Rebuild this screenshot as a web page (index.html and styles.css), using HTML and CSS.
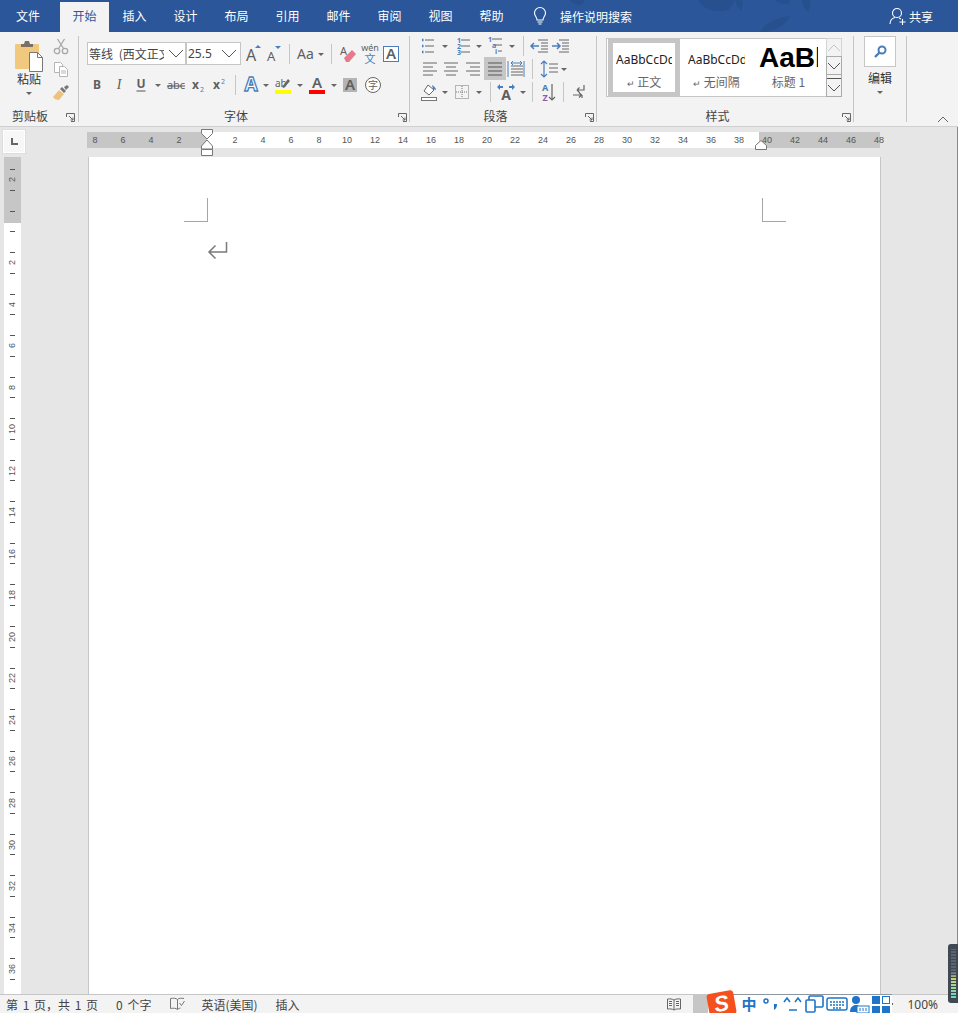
FILE: index.html
```html
<!DOCTYPE html>
<html lang="zh-CN">
<head>
    <meta charset="UTF-8">
    <title>文档1 - Word</title>
    <link rel="stylesheet" href="styles.css">
</head>
<body>

<!--Title bar and tabs-->
<header class="tabbar">
    <svg class="leaves" width="320" height="32" viewBox="0 0 320 32">
        <path d="M0 0c3 4 8 6 13 4l2-4z M128 0c4 8 16 14 30 10 4-3 6-7 6-10z M165 0c1 4 3 8 6 11 2-3 2-8 1-11z M190 32c4-8 14-14 30-16-4 9-14 15-24 16z M205 0c3 3 8 5 14 4l1-4z M232 0c0 5 2 9 6 12 2-4 3-9 2-12z"/>
    </svg>
    <a class="tab tab-first">文件</a>
    <a class="tab tab-active">开始</a>
    <a class="tab">插入</a>
    <a class="tab">设计</a>
    <a class="tab">布局</a>
    <a class="tab">引用</a>
    <a class="tab">邮件</a>
    <a class="tab">审阅</a>
    <a class="tab">视图</a>
    <a class="tab">帮助</a>
    <div class="search">
        <svg width="16" height="20" viewBox="0 0 16 20" fill="none" stroke="#fff" stroke-width="1.1"><path d="M5 14c0-3-2.500-4-2.500-7a5.500 5.500 0 0 1 11 0c0 3-2.500 4-2.500 7z"/><path d="M5.500 16h5M6.500 18h3"/></svg>
        <span>操作说明搜索</span>
    </div>
    <div class="share">
        <svg width="18" height="20" viewBox="0 0 18 20" fill="none" stroke="#fff" stroke-width="1.1"><circle cx="8" cy="7" r="4.500"/><path d="M1 18c0-4 3-6 5-6.500M10 12l2 1M13.500 13v6M10.500 16h6"/></svg>
        <span>共享</span>
    </div>
</header>

<!--Ribbon-->
<section class="ribbon">

    <!--Clipboard-->
    <div class="group group-clip">
        <div class="group-body clip-body">
            <div class="paste">
                <svg width="30" height="32" viewBox="0 0 30 32">
                    <rect x="1" y="4" width="24" height="25" rx="1" fill="#f0c97f"/>
                    <path d="M7 7V4h3l1-3h4l1 3h3v3z" fill="#7c7066"/>
                    <path d="M15.500 12.500h8l5 5v14h-13z" fill="#fff" stroke="#777"/>
                    <path d="M23.500 12.500v5h5" fill="none" stroke="#777"/>
                </svg>
                <span>粘贴</span>
                <svg width="12" height="8" viewBox="0 0 12 8"><path d="M3 2h6l-3 3z" fill="#666"/></svg>
            </div>
            <div class="clip-tools">
                <svg width="18" height="17" viewBox="0 0 18 17" fill="none" stroke="#a8a8a8" stroke-width="1.300"><circle cx="5" cy="13" r="2.700"/><circle cx="13" cy="13" r="2.700"/><path d="M6.500 10.500L12.500 1M11.500 10.500L5.500 1"/></svg>
                <svg width="18" height="17" viewBox="0 0 18 17" fill="#fff" stroke="#b4b4b4"><path d="M2.500 1.500h6l2 2v8h-8z"/><path d="M7.500 5.500h5l3 3v7h-8z"/><path d="M9 10h5M9 12h5" /></svg>
                <svg width="18" height="17" viewBox="0 0 18 17"><path d="M1 13l6-7 5 4-5 6c-3 0-5-1-6-3z" fill="#edc37c"/><path d="M8 5l2-2 4 4-2 2z" fill="#777"/><path d="M12 3l3-2 2 2-3 3z" fill="#777"/></svg>
            </div>
        </div>
        <div class="group-label label-clip">剪贴板
            <svg class="launcher" width="9" height="9" viewBox="0 0 9 9" fill="none" stroke="#666"><path d="M.5 4V.5h8v8H5M3 3l4 4M7 4.500V7H4.500"/></svg>
        </div>
    </div>

    <!--Font-->
    <div class="group group-font">
        <div class="group-body">
            <div class="font-row font-row-top">
                <div class="combo combo-font"><span>等线 (西文正文)</span>
                    <svg width="16" height="10" viewBox="0 0 16 10" fill="none" stroke="#555"><path d="M1 1l7 7 7-7"/></svg>
                </div>
                <div class="combo combo-size"><span>25.5</span>
                    <svg width="16" height="10" viewBox="0 0 16 10" fill="none" stroke="#555"><path d="M1 1l7 7 7-7"/></svg>
                </div>
                <svg width="22" height="20" viewBox="-11 -10 22 20"><text x="-6" y="7" class="ico-a">A</text><path d="M3-6h6l-3-3z" fill="#4a7ebb"/></svg>
                <svg width="21" height="20" viewBox="-10 -10 21 20"><text x="-6" y="7" class="ico-a ico-a-small">A</text><path d="M2-8h6l-3 3z" fill="#4a7ebb"/></svg>
                <i class="sep"></i>
                <svg width="21" height="20" viewBox="-10 -10 21 20"><text x="-8" y="5" class="ico-aa">Aa</text></svg>
                <svg width="10" height="20" viewBox="-5 -10 10 20"><path d="M-3-1h6l-3 3z" fill="#666"/></svg>
                <i class="sep"></i>
                <svg width="22" height="20" viewBox="-11 -10 22 20"><text x="-8" y="1" class="ico-a ico-a-tiny">A</text><path d="M-4 4l8-8 4 4-7 8h-3z" fill="#e8788a"/></svg>
                <svg class="wen" width="22" height="24" viewBox="-11 -12 22 24"><text x="0" y="-3" class="ico-wen">wén</text><text x="0" y="9" class="ico-wen-cn">文</text></svg>
                <svg width="21" height="20" viewBox="-10 -10 21 20"><rect x="-7.500" y="-7.500" width="15" height="15" fill="#fff" stroke="#4a7ebb"/><text x="0" y="5" class="ico-a ico-a-mid">A</text></svg>
            </div>
            <div class="font-row">
                <svg width="21" height="20" viewBox="-10 -10 21 20"><text x="0" y="4" class="ico-b">B</text></svg>
                <svg width="22" height="20" viewBox="-11 -10 22 20"><text x="0" y="4" class="ico-b ico-i">I</text></svg>
                <svg width="22" height="20" viewBox="-11 -10 22 20"><text x="0" y="3" class="ico-b">U</text><path d="M-4.500 6h9" stroke="#555"/></svg>
                <svg width="12" height="20" viewBox="-6 -10 12 20"><path d="M-3-1h6l-3 3z" fill="#666"/></svg>
                <svg width="24" height="20" viewBox="-12 -10 24 20"><text x="0" y="4" class="ico-abc">abc</text><path d="M-9 1h18" stroke="#555"/></svg>
                <svg width="21" height="20" viewBox="-10 -10 21 20"><text x="-6" y="4" class="ico-b ico-left">x</text><text x="2" y="7" class="ico-sub">2</text></svg>
                <svg width="21" height="20" viewBox="-10 -10 21 20"><text x="-6" y="4" class="ico-b ico-left">x</text><text x="2" y="-1" class="ico-sub">2</text></svg>
                <i class="sep"></i>
                <svg width="21" height="20" viewBox="-10 -10 21 20"><text x="0" y="6" class="ico-effect">A</text></svg>
                <svg width="8" height="20" viewBox="-4 -10 8 20"><path d="M-3-1h6l-3 3z" fill="#666"/></svg>
                <svg width="26" height="20" viewBox="-13 -10 26 20"><text x="-8" y="2" class="ico-ab">ab</text><path d="M-1 2l6-8 2 2-6 7z" fill="#666"/><rect x="-8" y="5" width="16" height="4" fill="#ffff00"/></svg>
                <svg width="8" height="20" viewBox="-4 -10 8 20"><path d="M-3-1h6l-3 3z" fill="#666"/></svg>
                <svg width="26" height="20" viewBox="-13 -10 26 20"><text x="0" y="3" class="ico-a ico-a-mid">A</text><rect x="-8" y="5" width="16" height="4" fill="#f00"/></svg>
                <svg width="9" height="20" viewBox="-4 -10 9 20"><path d="M-3-1h6l-3 3z" fill="#666"/></svg>
                <svg width="23" height="20" viewBox="-11 -10 23 20"><rect x="-7" y="-7" width="14" height="14" fill="#b4b4b4"/><text x="0" y="5" class="ico-a ico-a-mid">A</text></svg>
                <svg width="22" height="20" viewBox="-10 -10 22 20"><circle cx="1" r="7.500" fill="#fff" stroke="#666"/><text x="1" y="4" class="ico-zi">字</text></svg>
            </div>
        </div>
        <div class="group-label">字体
            <svg class="launcher" width="9" height="9" viewBox="0 0 9 9" fill="none" stroke="#666"><path d="M.5 4V.5h8v8H5M3 3l4 4M7 4.500V7H4.500"/></svg>
        </div>
    </div>

    <!--Paragraph-->
    <div class="group group-para">
        <div class="group-body para-body">
            <div class="para-row">
                <svg width="19" height="20" viewBox="-9 -10 19 20" stroke="#666"><path d="M-3-6h9M-3 0h9M-3 6h9"/><path d="M-6-6h1.500M-6 0h1.500M-6 6h1.500" stroke="#4a7ebb" stroke-width="2.500"/></svg>
                <svg width="14" height="20" viewBox="-7 -10 14 20"><path d="M-3-1h6l-3 3z" fill="#666"/></svg>
                <svg width="22" height="20" viewBox="-11 -10 22 20" stroke="#666"><path d="M-2-6h9M-2 0h9M-2 6h9"/><text x="-6" y="-3.500" class="ico-num">1</text><text x="-6" y="2.500" class="ico-num">2</text><text x="-6" y="8.500" class="ico-num">3</text></svg>
                <svg width="10" height="20" viewBox="-5 -10 10 20"><path d="M-3-1h6l-3 3z" fill="#666"/></svg>
                <svg width="22" height="20" viewBox="-11 -10 22 20" stroke="#666"><path d="M-3-7h10M0-1h7M3 5h4"/><text x="-7" y="-4.500" class="ico-num">1</text><text x="-3" y="1.500" class="ico-num">a</text><text x="0" y="8" class="ico-num">i</text></svg>
                <svg width="12" height="20" viewBox="-6 -10 12 20"><path d="M-3-1h6l-3 3z" fill="#666"/></svg>
                <i class="sep"></i>
                <svg width="21" height="20" viewBox="-10 -10 21 20" stroke="#666"><path d="M-1-6H9M2-3H9M2 0H9M2 3H9M-1 6H9"/><path d="M-8 0h8M-5-3l-3 3 3 3" fill="none" stroke="#4a7ebb" stroke-width="1.500"/></svg>
                <svg width="21" height="20" viewBox="-10 -10 21 20" stroke="#666"><path d="M-1-6H9M2-3H9M2 0H9M2 3H9M-1 6H9"/><path d="M-8 0h8M-3-3l3 3-3 3" fill="none" stroke="#4a7ebb" stroke-width="1.500"/></svg>
            </div>
            <div class="para-row">
                <svg width="21" height="20" viewBox="-10 -10 21 20" stroke="#666"><path d="M-6-6H8M-6-2H4M-6 2H8M-6 6H4"/></svg>
                <svg width="22" height="20" viewBox="-11 -10 22 20" stroke="#666"><path d="M-7-6H7M-5-2H5M-7 2H7M-5 6H5"/></svg>
                <svg width="22" height="20" viewBox="-11 -10 22 20" stroke="#666"><path d="M-7-6H7M-3-2H7M-7 2H7M-3 6H7"/></svg>
                <div class="active-btn"><svg width="22" height="20" viewBox="-11 -10 22 20" stroke="#555"><path d="M-7-6H7M-7-2H7M-7 2H7M-7 6H7"/></svg></div>
                <svg width="21" height="20" viewBox="-10 -10 21 20" stroke="#666" fill="none"><path d="M-5-3H7M-5 0H7M-5 3H7M-5 6H7"/><path d="M-8-8V8M8-8V8" stroke="#4a7ebb"/><path d="M-5-6H6M-3-8l-2 2 2 2M4-8l2 2-2 2" stroke="#4a7ebb"/></svg>
                <i class="sep"></i>
                <svg width="22" height="20" viewBox="-11 -10 22 20" fill="none" stroke="#666"><path d="M0-5H9M0-1H9M0 3H9"/><path d="M-5-8V8M-8-5l3-3 3 3M-8 5l3 3 3-3" stroke="#4a7ebb" stroke-width="1.200"/></svg>
                <svg width="8" height="20" viewBox="-4 -10 8 20"><path d="M-3-1h6l-3 3z" fill="#666"/></svg>
            </div>
            <div class="para-row">
                <svg width="20" height="20" viewBox="-10 -10 20 20"><path d="M-5-1l4-6 6 5-5 5z" fill="#fff" stroke="#666"/><path d="M3-7c2 1 4 3 4 5l-3-1z" fill="#4a7ebb"/><rect x="-7.500" y="5.500" width="15" height="3" fill="#fff" stroke="#777"/></svg>
                <svg width="12" height="20" viewBox="-6 -10 12 20"><path d="M-3-1h6l-3 3z" fill="#666"/></svg>
                <svg width="23" height="20" viewBox="-11 -10 23 20" fill="none" stroke="#777" stroke-dasharray="1 1"><rect x="-6.500" y="-6.500" width="13" height="13"/><path d="M0-6V6M-6 0H6"/></svg>
                <svg width="11" height="20" viewBox="-5 -10 11 20"><path d="M-3-1h6l-3 3z" fill="#666"/></svg>
                <i class="sep"></i>
                <svg width="20" height="20" viewBox="-10 -10 20 20"><text x="0" y="8" class="ico-a ico-a-wide">A</text><path d="M-9-5l3-3v2h3v2h-3v2zM9-5l-3-3v2H3v2h3v2z" fill="#4a7ebb"/></svg>
                <svg width="11" height="20" viewBox="-7 -10 11 20"><path d="M-3-1h6l-3 3z" fill="#666"/></svg>
                <i class="sep"></i>
                <svg width="20" height="20" viewBox="-10 -10 20 20"><text x="-3" y="-1" class="ico-az ico-az-a">A</text><text x="-3" y="9" class="ico-az ico-az-z">Z</text><path d="M4-8V8M1 5l3 3 3-3" fill="none" stroke="#666" stroke-width="1.200"/></svg>
                <i class="sep"></i>
                <svg width="21" height="20" viewBox="-10 -10 21 20" fill="none" stroke="#666" stroke-width="1.200"><path d="M-2-2H5V-7M-2-2l2.500-2.500M-2-2l2.500 2.500"/><path d="M-6 3H2M0 .5L2.500 3 0 5.500"/><path d="M3 3v3" /></svg>
            </div>
        </div>
        <div class="group-label">段落
            <svg class="launcher" width="9" height="9" viewBox="0 0 9 9" fill="none" stroke="#666"><path d="M.5 4V.5h8v8H5M3 3l4 4M7 4.500V7H4.500"/></svg>
        </div>
    </div>

    <!--Styles-->
    <div class="group group-styles">
        <div class="group-body styles-body">
            <div class="gallery">
                <div class="style-item style-selected">
                    <div class="preview">AaBbCcDdEe</div>
                    <div class="style-name"><small>↵</small> 正文</div>
                </div>
                <div class="style-item">
                    <div class="preview">AaBbCcDdEe</div>
                    <div class="style-name"><small>↵</small> 无间隔</div>
                </div>
                <div class="style-item style-heading">
                    <div class="preview preview-big">AaBbC</div>
                    <div class="style-name">标题 1</div>
                </div>
            </div>
            <div class="gallery-scroll">
                <div class="scroll-btn scroll-off"><svg width="14" height="10" viewBox="0 0 14 10" fill="none" stroke="#c6c6c6"><path d="M1 8l6-6 6 6"/></svg></div>
                <div class="scroll-btn"><svg width="14" height="10" viewBox="0 0 14 10" fill="none" stroke="#555"><path d="M1 2l6 6 6-6"/></svg></div>
                <div class="scroll-btn scroll-more"><svg width="14" height="10" viewBox="0 0 14 10" fill="none" stroke="#555"><path d="M1 2l6 6 6-6"/></svg></div>
            </div>
        </div>
        <div class="group-label">样式
            <svg class="launcher" width="9" height="9" viewBox="0 0 9 9" fill="none" stroke="#666"><path d="M.5 4V.5h8v8H5M3 3l4 4M7 4.500V7H4.500"/></svg>
        </div>
    </div>

    <!--Editing-->
    <div class="group group-edit">
        <div class="edit-box">
            <svg width="16" height="16" viewBox="0 0 16 16" fill="none" stroke="#4a7ebb"><circle cx="10" cy="6" r="3.500" stroke-width="2"/><path d="M7.500 8.500L3 13" stroke-width="2.400"/></svg>
        </div>
        <span class="edit-label">编辑</span>
        <svg width="12" height="8" viewBox="0 0 12 8"><path d="M3 2h6l-3 3z" fill="#666"/></svg>
    </div>

    <svg class="collapse" width="12" height="7" viewBox="0 0 12 7" fill="none" stroke="#666"><path d="M1 6l5-5 5 5"/></svg>
</section>

<!--Rulers and page-->
<main class="workspace">
    <div class="ruler-row">
        <div class="tab-stop">
            <svg width="7" height="7" viewBox="0 0 7 7" fill="none" stroke="#666" stroke-width="2"><path d="M1 0v6h6"/></svg>
        </div>
        <div class="h-ruler">
            <div class="h-marks">
                <span>8</span><span>6</span><span>4</span><span>2</span><span></span>
                <span>2</span><span>4</span><span>6</span><span>8</span><span>10</span><span>12</span>
                <span>14</span><span>16</span><span>18</span><span>20</span><span>22</span><span>24</span>
                <span>26</span><span>28</span><span>30</span><span>32</span><span>34</span><span>36</span>
                <span>38</span><span>40</span><span>42</span><span>44</span><span>46</span><span>48</span>
            </div>
            <svg class="indent-left" width="12" height="28" viewBox="0 0 12 28" fill="#fff" stroke="#777">
                <path d="M.5.500h11v4L6 10 .5 4.500z"/>
                <path d="M6 11l5.500 6v3H.5v-3z"/>
                <path d="M.5 20.500h11v6H.5z"/>
            </svg>
            <svg class="indent-right" width="12" height="10" viewBox="0 0 12 10" fill="#fff" stroke="#777">
                <path d="M.5 9.500v-4L6 .5l5.500 5v4z"/>
            </svg>
        </div>
    </div>

    <div class="doc-row">
        <div class="v-ruler">
            <div class="v-cell"><b></b><span>2</span><b></b></div>
            <div class="v-cell"><b></b><span></span><b></b></div>
            <div class="v-cell"><b></b><span>2</span><b></b></div>
            <div class="v-cell"><b></b><span>4</span><b></b></div>
            <div class="v-cell"><b></b><span>6</span><b></b></div>
            <div class="v-cell"><b></b><span>8</span><b></b></div>
            <div class="v-cell"><b></b><span>10</span><b></b></div>
            <div class="v-cell"><b></b><span>12</span><b></b></div>
            <div class="v-cell"><b></b><span>14</span><b></b></div>
            <div class="v-cell"><b></b><span>16</span><b></b></div>
            <div class="v-cell"><b></b><span>18</span><b></b></div>
            <div class="v-cell"><b></b><span>20</span><b></b></div>
            <div class="v-cell"><b></b><span>22</span><b></b></div>
            <div class="v-cell"><b></b><span>24</span><b></b></div>
            <div class="v-cell"><b></b><span>26</span><b></b></div>
            <div class="v-cell"><b></b><span>28</span><b></b></div>
            <div class="v-cell"><b></b><span>30</span><b></b></div>
            <div class="v-cell"><b></b><span>32</span><b></b></div>
            <div class="v-cell"><b></b><span>34</span><b></b></div>
            <div class="v-cell"><b></b><span>36</span><b></b></div>
        </div>
        <div class="page">
            <div class="crop-marks">
                <div class="crop crop-left"></div>
                <div class="crop crop-right"></div>
            </div>
            <svg class="para-mark" width="21" height="19" viewBox="0 0 21 19" fill="none" stroke="#7a7a7a" stroke-width="1.500"><path d="M19.500 1v10H2M8.500 4.500L2 11l6.500 6.500"/></svg>
        </div>
    </div>
</main>

<!--Status bar-->
<footer class="statusbar">
    <span class="stat-page">第 1 页，共 1 页</span>
    <span class="stat-words">0 个字</span>
    <svg class="stat-book" width="15" height="14" viewBox="0 0 15 14" fill="none" stroke="#777"><path d="M7.500 2.500C6 1 3 1 .5 1.500v10c2.500-.5 5.500-.5 7 1zM7.500 2.500C9 1 11 1 14 1.500M7.500 12.500c1-1 2-1.300 3-1.400M9.500 6l2 2.500L14.500 4"/></svg>
    <span class="stat-lang">英语(美国)</span>
    <span>插入</span>
    <div class="stat-right">
        <svg width="14" height="13" viewBox="0 0 14 13" fill="none" stroke="#666"><path d="M7 2C5 .8 3 .8.500 1v10c2.500-.2 4.500-.2 6.500 1 2-1.200 4-1.200 6.500-1V1C11 .8 9 .8 7 2zM7 2v10M2 3.500h3M2 5.500h3M2 7.500h3M9 3.500h3M9 5.500h3M9 7.500h3"/></svg>
        <div class="view-active"></div>
        <div class="zoom-dot"></div>
        <span class="zoom-pct">100%</span>
    </div>
</footer>

<!--Input method toolbar over the status bar-->
<div class="ime">
    <div class="ime-logo"><span>S</span></div>
    <span class="ime-cn">中</span>
    <svg width="22" height="18" viewBox="0 0 22 18" fill="#1e74c8"><circle cx="6" cy="6" r="2" fill="none" stroke="#1e74c8" stroke-width="1.500"/><path d="M14 9h3c0 3-1 5-3 6z"/></svg>
    <svg width="22" height="18" viewBox="0 0 22 18" fill="none" stroke="#1e74c8" stroke-width="1.600"><path d="M2 7l3-4 3 4M13 7l3-4 3 4M7 15h8"/></svg>
    <svg width="22" height="18" viewBox="0 0 22 18" fill="#fff" stroke="#1e74c8" stroke-width="1.600"><rect x="5" y="1" width="14" height="11" rx="1"/><rect x="2" y="5" width="9" height="12" rx="1"/></svg>
    <svg width="22" height="18" viewBox="0 0 22 18" fill="none" stroke="#1e74c8" stroke-width="1.500"><rect x="1" y="3" width="20" height="12" rx="2"/><path d="M4 7h14M4 10h14M7 13h8" stroke-dasharray="2 1"/></svg>
    <svg width="22" height="18" viewBox="0 0 22 18"><circle cx="8" cy="5" r="4" fill="#1e74c8"/><path d="M2 17c0-5 3-7 6-7s6 2 6 7z" fill="#1e74c8"/><rect x="9" y="11" width="12" height="7" fill="#fff" stroke="#1e74c8"/><path d="M12 13v3M15 13v3M18 13v3" stroke="#1e74c8"/></svg>
    <svg width="22" height="18" viewBox="0 0 22 18" fill="#1e74c8"><rect x="2" y="1" width="8" height="8"/><rect x="12.500" y="1.500" width="7" height="7" fill="none" stroke="#1e74c8"/><rect x="2" y="11" width="8" height="7"/><rect x="12" y="11" width="8" height="7"/></svg>
</div>

<!--Floating meter at the right edge-->
<div class="meter"></div>

</body>
</html>
```

FILE: styles.css
```css
/* Reset and page frame */
html, body {
    margin: 0;
    padding: 0;
    height: 100%;
}

body {
    display: flex;
    flex-direction: column;
    height: 1013px;
    overflow: hidden;
    position: relative;
    background-color: #e6e6e6;
    font-family: "Noto Sans CJK SC", "Liberation Sans", sans-serif;
    font-size: 12px;
    color: #444;
}

svg {
    display: block;
    flex: none;
}

/* Title bar and tabs */
.tabbar {
    flex: none;
    position: relative;
    display: flex;
    align-items: flex-end;
    height: 32px;
    background-color: #2b579a;
    color: #fff;
}

.leaves {
    position: absolute;
    left: 570px;
    top: 0;
    fill: #27508f;
}

.tab {
    position: relative;
    width: 51px;
    height: 30px;
    line-height: 28px;
    text-align: center;
}

.tab-first {
    width: 50px;
    margin-left: 3px;
    margin-right: 7px;
}

.tab-active {
    width: 49px;
    background-color: #f3f3f3;
    color: #2b579a;
}

.search {
    position: relative;
    display: flex;
    align-items: center;
    gap: 12px;
    height: 32px;
    margin-left: 3px;
    padding-left: 12px;
}

.share {
    position: relative;
    display: flex;
    align-items: center;
    gap: 2px;
    height: 32px;
    margin-left: auto;
    margin-right: 25px;
}

/* Ribbon */
.ribbon {
    flex: none;
    position: relative;
    display: flex;
    height: 95px;
    padding: 4px 0;
    box-sizing: border-box;
    background-color: #f3f3f3;
    border-bottom: 1px solid #d0d0d0;
}

.group {
    position: relative;
    display: flex;
    flex-direction: column;
    box-sizing: border-box;
    border-right: 1px solid #c6c6c6;
}

.group-body {
    flex: none;
    height: 70px;
}

.group-label {
    position: relative;
    padding-right: 24px;
    text-align: center;
    line-height: 19px;
    height: 16px;
    color: #444;
}

.launcher {
    position: absolute;
    right: 2px;
    bottom: 0;
}

.group-clip { width: 79px; padding-left: 6px; }
.group-font { width: 331px; padding-left: 8px; }
.group-para { width: 187px; padding-left: 9px; }
.group-styles { width: 257px; padding-left: 9px; }
.group-edit { width: 53px; align-items: center; }

.group-clip .group-label { margin-left: -6px; }
.group-clip .label-clip { padding-right: 18px; }
.group-clip .launcher { right: 3px; }

/* Clipboard */
.clip-body {
    display: flex;
}

.paste {
    display: flex;
    flex-direction: column;
    align-items: center;
    width: 46px;
    padding-top: 4px;
    line-height: 18px;
    color: #333;
}

.paste span {
    margin-top: -2px;
    margin-bottom: 2px;
}

.clip-tools {
    display: flex;
    flex-direction: column;
    gap: 6px;
    padding-top: 2px;
}

/* Font rows */
.font-row {
    display: flex;
    align-items: center;
    height: 20px;
}

.font-row-top {
    height: 23px;
    margin-top: 6px;
    margin-bottom: 10px;
}

.combo {
    display: flex;
    align-items: center;
    justify-content: space-between;
    box-sizing: border-box;
    height: 23px;
    padding: 0 1px 0 1px;
    background-color: #fff;
    border: 1px solid #c6c6c6;
    color: #444;
}

.combo span {
    overflow: hidden;
    white-space: nowrap;
}

.combo-font { width: 99px; }
.combo-font span { width: 75px; word-spacing: 3px; }
.combo-size { width: 55px; margin-left: 0; font-family: "Noto Sans", sans-serif; }
.combo-size svg { margin-right: 2px; }

.sep {
    flex: none;
    display: block;
    width: 1px;
    height: 20px;
    margin: 0 5px;
    background-color: #c6c6c6;
}

/* Small text inside the icons */
svg text {
    text-anchor: middle;
    font-family: "Noto Sans", "Liberation Sans", sans-serif;
    fill: #5f5f5f;
    stroke: none;
}

.ico-a { font-size: 16px; text-anchor: start; }
.ico-a-small { font-size: 13px; }
.ico-a-tiny { font-size: 11px; }
.ico-a-mid { font-size: 15px; font-weight: 600; text-anchor: middle; }
.ico-a-wide { font-size: 14px; font-weight: 700; text-anchor: middle; }
.ico-aa { font-size: 14px; text-anchor: start; }
.ico-b { font-size: 12px; font-weight: 700; }
.ico-i { font-style: italic; font-weight: 400; font-family: "Liberation Serif", serif; font-size: 14px; }
.ico-left { text-anchor: start; }
.ico-sub { font-size: 7px; fill: #4a7ebb; text-anchor: start; }
.ico-abc { font-size: 11px; }
.ico-ab { font-size: 10px; text-anchor: start; }
.ico-effect { font-size: 19px; font-weight: 700; fill: #fff; stroke: #4a7ebb; stroke-width: 1.300px; }
.ico-zi { font-family: "Noto Sans CJK SC", sans-serif; font-size: 10px; }
.ico-wen { font-size: 9px; }
.ico-wen-cn { font-family: "Noto Sans CJK SC", sans-serif; font-size: 11px; fill: #4a7ebb; }
.ico-num { font-size: 7px; font-weight: 700; fill: #4a7ebb; text-anchor: start; }
.ico-az { font-size: 9px; font-weight: 700; }
.ico-az-a { fill: #4a7ebb; }
.ico-az-z { fill: #8a5ea8; }

/* Paragraph rows */
.para-body {
    margin-top: -2px;
    margin-bottom: 2px;
}

.para-row {
    display: flex;
    align-items: center;
    height: 23px;
}

.active-btn {
    display: flex;
    align-items: center;
    height: 23px;
    background-color: #c6c6c6;
}

/* Styles gallery */
.styles-body {
    display: flex;
    margin-top: 2px;
    margin-bottom: -2px;
}

.gallery {
    display: flex;
    box-sizing: border-box;
    width: 220px;
    height: 59px;
    padding-left: 1px;
    background-color: #fff;
    border: 1px solid #c6c6c6;
    border-right: none;
}

.style-item {
    box-sizing: border-box;
    width: 73px;
    padding: 6px 8px 0;
    text-align: center;
    overflow: hidden;
}

.style-selected {
    width: 72px;
    margin-top: -1px;
    margin-bottom: -1px;
    padding: 2px 3px 0;
    border: 5px solid #c6c6c6;
}

.style-heading {
    padding: 3px 8px 0 6px;
}

.preview {
    height: 26px;
    line-height: 26px;
    margin-top: 2px;
    font-family: "Noto Sans", sans-serif;
    color: #222;
    white-space: nowrap;
    overflow: hidden;
    text-align: left;
}

.preview-big {
    height: 32px;
    line-height: 32px;
    margin-top: 0;
    margin-bottom: -1px;
    font-family: "Liberation Sans", sans-serif;
    font-size: 28px;
    font-weight: 700;
    color: #000;
}

.style-name {
    line-height: 18px;
    color: #666;
}

.style-name small {
    font-size: 9px;
}

.gallery-scroll {
    display: flex;
    flex-direction: column;
    width: 16px;
    height: 59px;
}

.scroll-btn {
    flex: 1;
    display: flex;
    align-items: center;
    justify-content: center;
    border: 1px solid #ababab;
    background-color: #f3f3f3;
    margin-top: -1px;
}

.scroll-btn:first-child {
    margin-top: 0;
}

.scroll-off {
    border-color: #d4d4d4;
}

.scroll-more {
    background: linear-gradient(#f3f3f3 3px, #555 3px, #555 4px, #f3f3f3 4px);
    padding-top: 4px;
}

/* Editing */
.edit-box {
    display: flex;
    align-items: center;
    justify-content: center;
    box-sizing: border-box;
    width: 32px;
    height: 31px;
    background-color: #fff;
    border: 1px solid #c6c6c6;
}

.edit-label {
    margin-top: 2px;
    line-height: 18px;
    color: #333;
}

.edit-label + svg {
    margin-top: 2px;
}

.collapse {
    position: absolute;
    right: 9px;
    bottom: 3px;
}

/* Workspace and rulers */
.workspace {
    flex: 1;
    display: flex;
    flex-direction: column;
    min-height: 0;
    border-right: 1px solid #888;
}

.ruler-row {
    flex: none;
    display: flex;
    height: 30px;
}

.tab-stop {
    display: flex;
    align-items: center;
    justify-content: center;
    box-sizing: border-box;
    width: 22px;
    height: 23px;
    margin: 3px 0 0 3px;
    background-color: #f7f7f7;
    border: 1px solid #fff;
    box-shadow: 0 0 0 1px #dedede;
}

.h-ruler {
    position: relative;
    width: 793px;
    height: 16px;
    margin: 5px 0 0 62px;
    background: linear-gradient(90deg, #c6c6c6 120px, #fff 120px, #fff 672px, #c6c6c6 672px);
}

.h-marks {
    display: flex;
    margin-left: -6px;
    font-family: "Liberation Sans", sans-serif;
    font-size: 9px;
    line-height: 16px;
    color: #555;
}

.h-marks span {
    flex: none;
    width: 28px;
    text-align: center;
}

.indent-left {
    position: absolute;
    left: 114px;
    top: -3px;
}

.indent-right {
    position: absolute;
    left: 668px;
    top: 8px;
}

.doc-row {
    flex: 1;
    display: flex;
    min-height: 0;
}

.v-ruler {
    flex: none;
    width: 17px;
    margin-left: 4px;
    padding-top: 2px;
    overflow: hidden;
    background: linear-gradient(#c6c6c6 66px, #fff 66px);
    font-family: "Liberation Sans", sans-serif;
    font-size: 9px;
    color: #555;
}

.v-cell {
    display: flex;
    flex-direction: column;
    align-items: center;
    justify-content: space-between;
    box-sizing: border-box;
    height: 41.55px;
    padding: 10px 0;
}

.v-cell b {
    display: block;
    width: 5px;
    height: 1px;
    background-color: #555;
}

.v-cell span {
    writing-mode: vertical-rl;
    transform: rotate(180deg);
    line-height: 9px;
}

.page {
    box-sizing: border-box;
    width: 793px;
    margin-left: 67px;
    padding: 41px 94px 0 95px;
    background-color: #fff;
    border-left: 1px solid #c6c6c6;
    border-right: 1px solid #c6c6c6;
}

.crop-marks {
    display: flex;
    justify-content: space-between;
}

.crop {
    box-sizing: border-box;
    width: 24px;
    height: 24px;
    border-bottom: 1px solid #a6a6a6;
}

.crop-left {
    border-right: 1px solid #a6a6a6;
}

.crop-right {
    border-left: 1px solid #a6a6a6;
}

.para-mark {
    margin: 19px 0 0 23px;
}

/* Status bar */
.statusbar {
    flex: none;
    display: flex;
    align-items: center;
    box-sizing: border-box;
    height: 19px;
    padding-left: 6px;
    background-color: #f3f3f3;
    border-top: 1px solid #c6c6c6;
    color: #444;
    word-spacing: 2px;
}

.stat-words { margin-left: 18px; }
.stat-book { margin-left: 19px; }
.stat-lang { margin-left: 16px; margin-right: 18px; }

.stat-right {
    display: flex;
    align-items: center;
    height: 100%;
    margin-left: auto;
    padding-right: 20px;
}

.view-active {
    width: 24px;
    height: 100%;
    margin-left: 12px;
    background-color: #c6c6c6;
}

.zoom-dot {
    width: 2px;
    height: 2px;
    margin-left: 174px;
    background-color: #666;
}

.zoom-pct {
    margin-left: 14px;
    font-family: "Noto Sans", sans-serif;
}

/* Input method toolbar */
.ime {
    position: absolute;
    left: 708px;
    bottom: 0;
    display: flex;
    align-items: center;
    width: 184px;
    height: 19px;
    padding-left: 30px;
    box-sizing: border-box;
    background-color: #fff;
    border-top: 1px solid #8e96a0;
}

.ime-cn {
    width: 20px;
    margin-left: 1px;
    margin-right: 1px;
    color: #1e74c8;
    font-size: 15px;
    font-weight: 700;
    line-height: 18px;
    text-align: center;
}

.ime-logo {
    position: absolute;
    left: 0;
    top: -3px;
    box-sizing: border-box;
    width: 27px;
    height: 24px;
    background-color: #f4511e;
    border-radius: 3px;
    transform: rotate(-10deg);
    text-align: center;
    overflow: hidden;
}

.ime-logo span {
    font-family: "Liberation Sans", sans-serif;
    font-size: 22px;
    font-weight: 700;
    font-style: italic;
    line-height: 24px;
    color: #fff;
}

/* Meter at the right edge */
.meter {
    position: absolute;
    right: 0;
    top: 944px;
    width: 10px;
    height: 59px;
    border-radius: 3px 0 0 3px;
    background:
        repeating-linear-gradient(#3f4953 0 1px, transparent 1px 3px) 0 0 / 100% 100%,
        linear-gradient(#5a6570 45%, #c8d47a 60%, #72d4b8 95%) 3px 5px / 5px 50px no-repeat,
        #3f4953;
}
```
